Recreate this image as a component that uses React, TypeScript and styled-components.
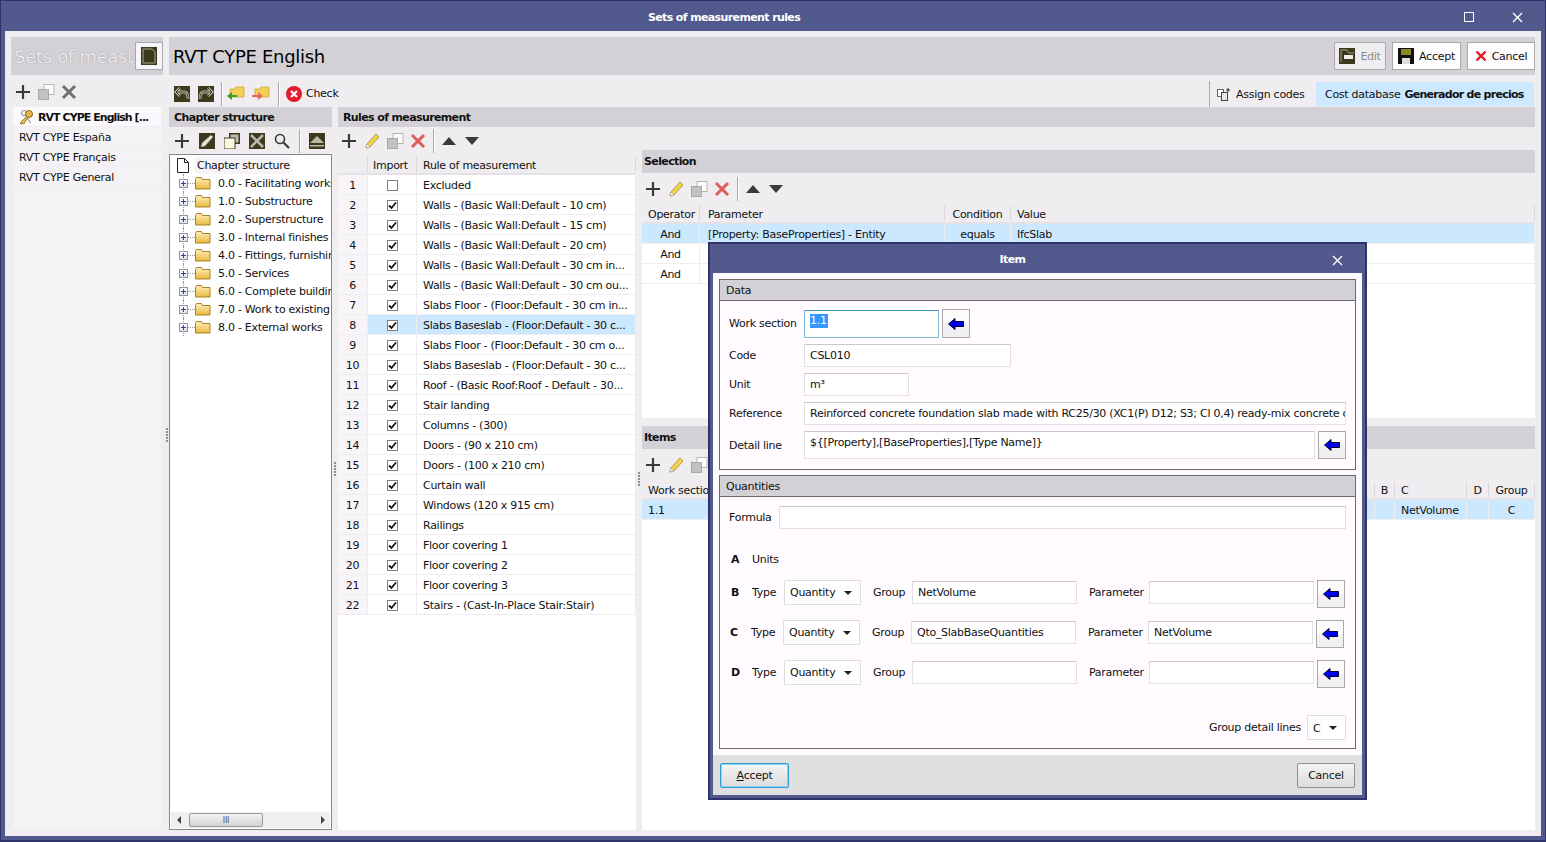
import type { ReactNode } from "react";
import styled, { createGlobalStyle } from "styled-components";

const FONT = `"DejaVu Sans", Tahoma, sans-serif`;
const BOLD_SPACING = "-0.62px";

const RULES = [
  "Excluded",
  "Walls - (Basic Wall:Default - 10 cm)",
  "Walls - (Basic Wall:Default - 15 cm)",
  "Walls - (Basic Wall:Default - 20 cm)",
  "Walls - (Basic Wall:Default - 30 cm in...",
  "Walls - (Basic Wall:Default - 30 cm ou...",
  "Slabs Floor - (Floor:Default - 30 cm in...",
  "Slabs Baseslab - (Floor:Default - 30 c...",
  "Slabs Floor - (Floor:Default - 30 cm o...",
  "Slabs Baseslab - (Floor:Default - 30 c...",
  "Roof - (Basic Roof:Roof - Default - 30...",
  "Stair landing",
  "Columns - (300)",
  "Doors - (90 x 210 cm)",
  "Doors - (100 x 210 cm)",
  "Curtain wall",
  "Windows (120 x 915 cm)",
  "Railings",
  "Floor covering 1",
  "Floor covering 2",
  "Floor covering 3",
  "Stairs - (Cast-In-Place Stair:Stair)",
];

const CHAPTERS = [
  "0.0 - Facilitating works",
  "1.0 - Substructure",
  "2.0 - Superstructure",
  "3.0 - Internal finishes",
  "4.0 - Fittings, furnishings",
  "5.0 - Services",
  "6.0 - Complete buildings",
  "7.0 - Work to existing",
  "8.0 - External works",
];

const SETS = ["RVT CYPE España", "RVT CYPE Français", "RVT CYPE General"];

const GlobalStyle = createGlobalStyle`
  html, body { margin: 0; padding: 0; background: #52598c; }
  body { font-family: ${FONT}; font-size: 11px; letter-spacing: -0.27px; color: #111; }
  * { box-sizing: border-box; }
`;

const Window = styled.div`
  width: 1546px;
  height: 842px;
  display: flex;
  flex-direction: column;
  position: relative;
  overflow: hidden;
  background: #52598c;
  border: 1px solid #2f3468;
  border-bottom-width: 2px;
`;

const TitleBar = styled.div`
  height: 30px;
  flex: none;
  display: flex;
  align-items: center;
  padding: 2px 0 0 4px;
  color: #fff;
  font-weight: bold;
  letter-spacing: ${BOLD_SPACING};
`;

const TitleText = styled.div`
  flex: 1;
  text-align: center;
`;

const TitleButtons = styled.div`
  width: 102px;
  display: flex;
  align-items: center;
  gap: 38px;
  padding-left: 21px;
`;

const Body = styled.div`
  flex: 1;
  margin: 0 4px 4px 4px;
  padding: 6px;
  background: #efedf0;
  display: flex;
  gap: 6px;
  min-height: 0;
`;

const LeftColumn = styled.div`
  width: 152px;
  flex: none;
  display: flex;
  flex-direction: column;
`;

const RightColumn = styled.div`
  flex: 1;
  min-width: 0;
  display: flex;
  flex-direction: column;
`;

const BigHeader = styled.div`
  height: 38px;
  flex: none;
  background: #d3d1d5;
  display: flex;
  align-items: center;
  overflow: hidden;
`;

const GhostTitle = styled.div`
  font-size: 18px;
  letter-spacing: -0.3px;
  color: #eeecef;
  text-shadow: 0 0 1px #77767a;
  padding-left: 3px;
  white-space: nowrap;
  width: 124px;
  overflow: hidden;
`;

const BigTitle = styled.div`
  font-size: 18px;
  letter-spacing: -0.3px;
  color: #000;
  padding-left: 4px;
  flex: 1;
`;

const HeaderIconButton = styled.div`
  width: 28px;
  height: 28px;
  flex: none;
  background: #f6f4f7;
  border: 1px solid #a9a9a9;
  display: flex;
  align-items: center;
  justify-content: center;
`;

const HeaderButton = styled.div<{ $w: number; $dim?: boolean }>`
  width: ${(p) => p.$w}px;
  height: 28px;
  flex: none;
  margin-right: 6px;
  background: ${(p) => (p.$dim ? "#efedf0" : "#fdfdfd")};
  border: 1px solid #a9a9a9;
  color: ${(p) => (p.$dim ? "#8b8b8b" : "#111")};
  display: flex;
  align-items: center;
  justify-content: center;
  gap: 5px;
  &:last-child { margin-right: 0; }
`;

const IconRow = styled.div<{ $h: number; $pt?: number }>`
  height: ${(p) => p.$h}px;
  padding-top: ${(p) => p.$pt ?? 0}px;
  flex: none;
  display: flex;
  align-items: center;
`;

const Slot = styled.div<{ $w?: number }>`
  width: ${(p) => p.$w ?? 23}px;
  height: 24px;
  flex: none;
  display: flex;
  align-items: center;
  justify-content: center;
`;

const Sep = styled.div<{ $l: number; $r: number }>`
  width: 2px;
  height: 24px;
  background: #a8a7aa;
  border-right: 1px solid #fff;
  flex: none;
  margin: 0 ${(p) => p.$r}px 0 ${(p) => p.$l}px;
`;

const SetList = styled.div`
  flex: 1;
  margin: 0 2px 1px 2px;
  background: #f5f2f6;
`;

const SetRow = styled.div<{ $active?: boolean }>`
  height: 20px;
  display: flex;
  align-items: center;
  gap: 4px;
  padding: 1px 0 0 ${(p) => (p.$active ? 5 : 6)}px;
  font-weight: ${(p) => (p.$active ? "bold" : "normal")};
  letter-spacing: ${(p) => (p.$active ? "-0.95px" : "inherit")};
  background: ${(p) => (p.$active ? "#fbf9fc" : "#f5f2f6")};
  border-bottom: 1px solid #efedf0;
  white-space: nowrap;
`;

const MainToolbar = styled.div`
  height: 27px;
  margin-top: 5px;
  flex: none;
  display: flex;
  align-items: center;
`;

const Grow = styled.div`
  flex: 1;
`;

const CheckLabel = styled.div`
  display: flex;
  align-items: center;
  gap: 4px;
  padding-left: 3px;
`;

const AssignCodes = styled.div`
  width: 107px;
  height: 26px;
  border-left: 1px solid #a8a7aa;
  display: flex;
  align-items: center;
  gap: 5px;
  padding: 1px 0 0 6px;
`;

const CostBox = styled.div`
  width: 218px;
  height: 24px;
  margin-right: 1px;
  background: #cce8ff;
  display: flex;
  align-items: center;
  padding: 1px 0 0 9px;
  gap: 4px;
  white-space: nowrap;
  b { letter-spacing: -0.72px; }
`;

const Panes = styled.div`
  flex: 1;
  min-height: 0;
  display: flex;
`;

const ChapterPane = styled.div`
  width: 163px;
  flex: none;
  display: flex;
  flex-direction: column;
`;

const Splitter = styled.div`
  width: 6px;
  flex: none;
  display: flex;
  align-items: center;
  justify-content: center;
`;

const Grip = styled.div`
  width: 2px;
  height: 14px;
  background: repeating-linear-gradient(to bottom, #8f8f93 0 2px, transparent 2px 3px);
`;

const SideGrip = styled(Grip)`
  position: absolute;
  left: 165px;
  top: 427px;
`;

const RulesArea = styled.div`
  flex: 1;
  min-width: 0;
  display: flex;
  flex-direction: column;
`;

const RulesBody = styled.div`
  flex: 1;
  min-height: 0;
  display: flex;
`;

const RulesPane = styled.div`
  width: 298px;
  flex: none;
  display: flex;
  flex-direction: column;
`;

const SelectionPane = styled.div`
  flex: 1;
  min-width: 0;
  display: flex;
  flex-direction: column;
`;

const SectionHeader = styled.div<{ $h?: number; $top?: number }>`
  height: ${(p) => p.$h ?? 20}px;
  margin-top: ${(p) => p.$top ?? 0}px;
  flex: none;
  background: #d3d1d5;
  display: flex;
  align-items: center;
  padding-left: ${(p) => (p.$h ? 2 : 5)}px;
  font-weight: bold;
  letter-spacing: ${BOLD_SPACING};
`;

const TreeBox = styled.div`
  flex: 1;
  background: #fff;
  border: 1px solid #828790;
  display: flex;
  flex-direction: column;
  overflow: hidden;
`;

const TreeRoot = styled.div`
  height: 18px;
  flex: none;
  display: flex;
  align-items: center;
  margin-top: 1px;
  padding-left: 6px;
  gap: 5px;
  white-space: nowrap;
`;

const TreeRootLabel = styled.div`
  background: #f7f3f7;
  padding: 2px 2px;
`;

const TreeItem = styled.div`
  height: 18px;
  flex: none;
  display: flex;
  align-items: center;
  padding-left: 9px;
  white-space: nowrap;
  position: relative;
  &::before {
    content: "";
    position: absolute;
    left: 13px;
    top: 0;
    bottom: 0;
    border-left: 1px dotted #9a9a9a;
  }
  &:last-of-type::before { bottom: 9px; }
`;

const Expander = styled.div`
  width: 9px;
  height: 9px;
  flex: none;
  border: 1px solid #8e96a8;
  background: linear-gradient(#fff, #dfe3ee);
  position: relative;
  z-index: 1;
  &::before {
    content: "";
    position: absolute;
    left: 1px;
    top: 3px;
    width: 5px;
    height: 1px;
    background: #33438c;
  }
  &::after {
    content: "";
    position: absolute;
    left: 3px;
    top: 1px;
    width: 1px;
    height: 5px;
    background: #33438c;
  }
`;

const TreeDash = styled.div`
  width: 7px;
  flex: none;
  border-top: 1px dotted #9a9a9a;
`;

const TreeLabel = styled.div`
  margin-left: 7px;
`;

const TreeSpacer = styled.div`
  flex: 1;
`;

const HScroll = styled.div`
  height: 16px;
  flex: none;
  margin: 0 1px 1px 1px;
  background: #efefef;
  display: flex;
  align-items: center;
  padding: 0 5px 0 6px;
`;

const ScrollThumb = styled.div`
  width: 74px;
  height: 14px;
  margin-left: 8px;
  border: 1px solid #9a9a9a;
  border-radius: 2px;
  background: linear-gradient(#f2f2f2, #d3d3d3);
  display: flex;
  align-items: center;
  justify-content: center;
  font-size: 8px;
  color: #555;
`;

const ScrollArrow = styled.div<{ $dir: "left" | "right" }>`
  width: 0;
  height: 0;
  border-top: 4px solid transparent;
  border-bottom: 4px solid transparent;
  ${(p) =>
    p.$dir === "left"
      ? "border-right: 4px solid #444;"
      : "border-left: 4px solid #444; margin-left: auto;"}
`;

const TableHead = styled.div<{ $cols: string }>`
  height: 20px;
  flex: none;
  display: grid;
  grid-template-columns: ${(p) => p.$cols};
  border-bottom: 2px solid #e4e2e6;
`;

const HeadCell = styled.div<{ $center?: boolean; $pad?: number }>`
  display: flex;
  align-items: center;
  justify-content: ${(p) => (p.$center ? "center" : "flex-start")};
  padding-left: ${(p) => (p.$center ? 0 : p.$pad ?? 6)}px;
  padding-top: 1px;
  border-right: 1px solid #d9d7db;
  margin: 2px 0 1px;
  white-space: nowrap;
  overflow: hidden;
`;

const TableBody = styled.div`
  flex: 1;
  min-height: 0;
  background: #fff;
`;

const TableRow = styled.div<{ $cols: string; $selected?: boolean }>`
  height: 20px;
  display: grid;
  grid-template-columns: ${(p) => p.$cols};
  background: ${(p) => (p.$selected ? "#cce8ff" : "#fff")};
  border-bottom: 1px solid #efedf0;
`;

const Cell = styled.div<{ $center?: boolean; $num?: boolean; $pad?: number }>`
  display: flex;
  align-items: center;
  justify-content: ${(p) => (p.$center ? "center" : "flex-start")};
  padding-left: ${(p) => (p.$center ? 0 : p.$pad ?? 6)}px;
  padding-top: 1px;
  border-right: 1px solid #efedf0;
  white-space: nowrap;
  overflow: hidden;
  background: ${(p) => (p.$num ? "#f8f5f9" : "transparent")};
`;

const CheckBox = styled.div`
  width: 11px;
  height: 11px;
  border: 1px solid #7f7f7f;
  background: #fff;
  display: flex;
  align-items: center;
  justify-content: center;
`;

const SelectionBlock = styled.div`
  height: 291px;
  flex: none;
  display: flex;
  flex-direction: column;
`;

const BlockBody = styled.div`
  flex: 1;
  background: #fff;
`;

/* dialog */
const Dialog = styled.div`
  position: absolute;
  left: 707px;
  top: 241px;
  width: 659px;
  height: 558px;
  background: #52598c;
  border: 2px solid #2f3468;
  display: flex;
  flex-direction: column;
`;

const DialogTitle = styled.div`
  height: 29px;
  flex: none;
  padding: 2px 50px 0 0;
  color: #fff;
  font-weight: bold;
  letter-spacing: ${BOLD_SPACING};
  display: flex;
  align-items: center;
  justify-content: center;
  position: relative;
`;

const DialogClose = styled.div`
  position: absolute;
  right: 22px;
  top: 11px;
  display: flex;
`;

const DialogBody = styled.div`
  flex: 1;
  margin: 0 3px 3px;
  background: #fdfafe;
  display: flex;
  flex-direction: column;
`;

const Group = styled.div<{ $h: number; $top: number }>`
  height: ${(p) => p.$h}px;
  margin: ${(p) => p.$top}px 6px 0;
  flex: none;
  border: 1px solid #6a6a6a;
  background: #fffbff;
  display: flex;
  flex-direction: column;
`;

const GroupHeader = styled.div`
  height: 21px;
  flex: none;
  background: #d3d1d5;
  border-bottom: 1px solid #6a6a6a;
  display: flex;
  align-items: center;
  padding-left: 6px;
`;

const FormRow = styled.div<{ $top: number; $h: number; $left?: number }>`
  height: ${(p) => p.$h}px;
  margin-top: ${(p) => p.$top}px;
  padding-left: ${(p) => p.$left ?? 9}px;
  flex: none;
  display: flex;
  align-items: center;
  white-space: nowrap;
`;

const FieldLabel = styled.div<{ $w: number; $gap?: number }>`
  width: ${(p) => p.$w}px;
  margin-left: ${(p) => p.$gap ?? 0}px;
  flex: none;
`;

const RowLetter = styled.div`
  width: 21px;
  flex: none;
  font-weight: bold;
`;

const Field = styled.div<{ $w: number; $h?: number; $focus?: boolean; $pt?: number }>`
  width: ${(p) => p.$w}px;
  height: ${(p) => p.$h ?? 23}px;
  flex: none;
  background: #fff;
  border: 1px solid ${(p) => (p.$focus ? "#7fb8d8" : "#e2e0e4")};
  border-top-color: ${(p) => (p.$focus ? "#3f97c8" : "#c9c7cb")};
  border-radius: 1px;
  padding: ${(p) => p.$pt ?? 0}px 5px 0;
  display: flex;
  align-items: ${(p) => (p.$pt ? "flex-start" : "center")};
  overflow: hidden;
  white-space: nowrap;
`;

const Selected = styled.span`
  background: #3399ff;
  color: #fff;
  line-height: 14px;
  padding-right: 1px;
`;

const PickButton = styled.div<{ $h?: number; $low?: boolean }>`
  width: 28px;
  height: ${(p) => p.$h ?? 28}px;
  margin: ${(p) => (p.$low ? 4 : 0)}px 0 0 3px;
  flex: none;
  border: 1px solid #a9a9a9;
  background: linear-gradient(#fbfbfb 50%, #f0eff1 50%);
  display: flex;
  align-items: center;
  justify-content: center;
`;

const Select = styled.div<{ $w: number }>`
  width: ${(p) => p.$w}px;
  height: 25px;
  flex: none;
  background: #fff;
  border: 1px solid #dedce0;
  border-radius: 1px;
  display: flex;
  align-items: center;
  padding: 1px 8px 0 5px;
  justify-content: space-between;
  &::after {
    content: "";
    border-left: 4px solid transparent;
    border-right: 4px solid transparent;
    border-top: 4px solid #222;
  }
`;

const RightRow = styled(FormRow)`
  justify-content: flex-end;
  padding-right: 9px;
  gap: 6px;
`;

const DialogFooter = styled.div`
  height: 40px;
  margin-top: 6px;
  flex: none;
  background: #dfdfdf;
  display: flex;
  align-items: center;
  justify-content: space-between;
  padding: 0 7px;
`;

const FooterButton = styled.div<{ $w: number; $primary?: boolean }>`
  width: ${(p) => p.$w}px;
  height: 25px;
  border: 1px solid ${(p) => (p.$primary ? "#2f9ed8" : "#8f8f8f")};
  box-shadow: ${(p) => (p.$primary ? "inset 0 0 0 1px #8fd3f2" : "none")};
  border-radius: 2px;
  background: linear-gradient(#f4f4f4, #dcdcdc);
  display: flex;
  align-items: center;
  justify-content: center;
  u { text-decoration: underline; }
`;

const Svg = styled.svg`
  display: block;
  flex: none;
`;

const Plus = () => (
  <Svg width="16" height="16" viewBox="0 0 16 16">
    <path d="M8 1v14M1 8h14" stroke="#3a3a3a" strokeWidth="2.2" />
  </Svg>
);

const CopyIcon = () => (
  <Svg width="18" height="18" viewBox="0 0 18 18">
    <rect x="7" y="1.5" width="10" height="10" fill="#fff" stroke="#b5b5b5" />
    <rect x="1.5" y="6.5" width="10" height="10" fill="#c2c2c2" stroke="#a8a8a8" />
  </Svg>
);

const CrossIcon = ({ color = "#6f6f6f", size = 16 }: { color?: string; size?: number }) => (
  <Svg width={size} height={size} viewBox="0 0 16 16">
    <path d="M2 2l12 12M14 2L2 14" stroke={color} strokeWidth="3" />
  </Svg>
);

const Pencil = () => (
  <Svg width="16" height="16" viewBox="0 0 16 16">
    <path d="M12 1l3 3-9 10-4 1 1-4z" fill="#f3d24f" stroke="#b39a3a" />
    <path d="M2 15l1-4 3 3z" fill="#fff" stroke="#999" strokeWidth=".6" />
  </Svg>
);

const Triangle = ({ down }: { down?: boolean }) => (
  <Svg width="14" height="8" viewBox="0 0 14 8">
    <path d={down ? "M0 0h14L7 8z" : "M0 8h14L7 0z"} fill="#3a3a3a" />
  </Svg>
);

const OliveBox = ({ children }: { children: ReactNode }) => (
  <Svg width="16" height="16" viewBox="0 0 16 16">
    <rect width="16" height="16" fill="#3b3a1c" />
    {children}
  </Svg>
);

const UndoIcon = ({ flip }: { flip?: boolean }) => (
  <OliveBox>
    <g transform={flip ? "matrix(-1 0 0 1 16 0)" : undefined} fill="none">
      <path d="M6 2L2 6l4 4M2 6h8c3 0 4 3 4 7" stroke="#b9b9ad" strokeWidth="2.8" />
      <path d="M6 2L2 6l4 4M2 6h8c3 0 4 3 4 7" stroke="#3b3a1c" strokeWidth="1" />
    </g>
  </OliveBox>
);

const FolderArrow = ({ right }: { right?: boolean }) => (
  <Svg width="20" height="16" viewBox="0 0 20 16">
    <path d="M4 3h5l1-2h8v10H4z" fill="#f2cf55" stroke="#c9a526" strokeWidth=".7" />
    {right ? (
      <path d="M1 9h6V6l5 4-5 4v-3H1z" fill="#de6a63" />
    ) : (
      <path d="M11 9H6V6l-5 4 5 4v-3h5z" fill="#3d9a25" />
    )}
  </Svg>
);

const RedCheck = () => (
  <Svg width="16" height="16" viewBox="0 0 16 16">
    <circle cx="8" cy="8" r="8" fill="#e11b2c" />
    <path d="M5 5l6 6M11 5l-6 6" stroke="#fff" strokeWidth="2.2" />
  </Svg>
);

const EditChapter = () => (
  <OliveBox>
    <path d="M12 2l2 2-8 9-4 1 1-4z" fill="#e6e6da" stroke="#8a8a7a" strokeWidth=".6" />
  </OliveBox>
);

const CopyChapter = () => (
  <OliveBox>
    <rect width="16" height="16" fill="#efedf0" />
    <rect x="5" width="11" height="11" fill="#3b3a1c" />
    <rect x="6.5" y="1.5" width="8" height="8" fill="#b9b9ad" />
    <rect y="5" width="11" height="11" fill="#fbf8df" stroke="#3b3a1c" />
  </OliveBox>
);

const CrossChapter = () => (
  <OliveBox>
    <path d="M2 2l12 12M14 2L2 14" stroke="#b9b9b0" strokeWidth="2.5" />
  </OliveBox>
);

const SearchIcon = () => (
  <Svg width="16" height="16" viewBox="0 0 16 16">
    <circle cx="6" cy="6" r="4.5" fill="none" stroke="#3a3a3a" strokeWidth="1.6" />
    <path d="M9.5 9.5L15 15" stroke="#3a3a3a" strokeWidth="2.2" />
  </Svg>
);

const UpChapter = () => (
  <OliveBox>
    <path d="M1 10L8 3l7 7z" fill="#b9b9ad" />
    <rect x="1" y="12" width="14" height="1.5" fill="#b9b9ad" />
  </OliveBox>
);

const Doc = () => (
  <Svg width="14" height="15" viewBox="0 0 14 15">
    <path d="M1.5.5h7l4 4v10h-11z" fill="#fff" stroke="#222" />
    <path d="M8.5.5v4h4" fill="none" stroke="#222" />
  </Svg>
);

const Folder = () => (
  <Svg width="16" height="14" viewBox="0 0 16 14">
    <defs>
      <linearGradient id="fold" x1="0" y1="0" x2="0" y2="1">
        <stop offset="0" stopColor="#fff0b8" />
        <stop offset="1" stopColor="#e9b93f" />
      </linearGradient>
    </defs>
    <path d="M.5 3.5l1-2h5l1 2h7.5v9.500H.5z" fill="url(#fold)" stroke="#a9812c" />
  </Svg>
);

const Key = () => (
  <Svg width="16" height="16" viewBox="0 0 16 16">
    <circle cx="6" cy="4" r="2.5" fill="none" stroke="#9aa0aa" strokeWidth="1.2" />
    <path d="M7.5 6l5 8" stroke="#9aa0aa" strokeWidth="1.4" />
    <circle cx="11" cy="5" r="3.5" fill="#e8b84a" stroke="#8a6a1e" />
    <path d="M8.500 7.500L2 14l1.500 1.500L5 14l1 1 1-2 2.500-4" fill="#e8b84a" stroke="#8a6a1e" strokeWidth=".8" />
  </Svg>
);

const Check = () => (
  <Svg width="9" height="9" viewBox="0 0 9 9">
    <path d="M1 4.500l2.500 2.500L8 1.500" fill="none" stroke="#111" strokeWidth="1.800" />
  </Svg>
);

const BlueArrow = () => (
  <Svg width="16" height="12" viewBox="0 0 16 12">
    <path d="M.5 6L7 .5V3.500h8.500v5H7v3z" fill="#0000f0" stroke="#000028" />
  </Svg>
);

const Floppy = () => (
  <Svg width="16" height="16" viewBox="0 0 16 16">
    <rect width="16" height="16" fill="#111" />
    <rect x="3" y="1" width="10" height="6" fill="#8a8a22" />
    <rect x="4" y="10" width="8" height="6" fill="#ddd" />
  </Svg>
);

const EditFolder = () => (
  <Svg width="16" height="16" viewBox="0 0 16 16">
    <rect width="16" height="16" fill="#3b3a1c" />
    <path d="M2 14V2h6l2 3h5" fill="none" stroke="#a5a58a" />
    <rect x="5" y="7" width="9" height="4" fill="#eee" />
  </Svg>
);

const PageIcon = () => (
  <Svg width="16" height="18" viewBox="0 0 16 18">
    <rect width="16" height="18" fill="#3b3a1c" />
    <path d="M2 16V2h9l3 3v11z" fill="none" stroke="#a5a58a" />
  </Svg>
);

const AssignIcon = () => (
  <Svg width="15" height="15" viewBox="0 0 15 15">
    <rect x="1.500" y="2.500" width="6" height="7" fill="#fff" stroke="#666" />
    <rect x="5.500" y="5.500" width="6" height="8" fill="#e8e8e8" stroke="#444" />
    <path d="M12 1v4M10 3h4" stroke="#333" />
  </Svg>
);

const WinClose = () => (
  <Svg width="11" height="11" viewBox="0 0 11 11">
    <path d="M1 1l9 9M10 1l-9 9" stroke="#fff" strokeWidth="1.400" />
  </Svg>
);

const WinMax = () => (
  <Svg width="10" height="10" viewBox="0 0 10 10">
    <rect x=".5" y=".5" width="9" height="9" fill="none" stroke="#fff" />
  </Svg>
);

const RULE_COLS = "30px 49px 1fr";
const SEL_COLS = "58px 245px 66px 1fr";
const ITEM_COLS = "733px 20px 72px 22px 46px";

const ItemToolbar = () => (
  <>
    <Slot $w={22}><Plus /></Slot>
    <Slot><Pencil /></Slot>
    <Slot><CopyIcon /></Slot>
    <Slot><CrossIcon color="#d9605c" /></Slot>
    <Sep $l={4} $r={2} />
    <Slot><Triangle /></Slot>
    <Slot><Triangle down /></Slot>
  </>
);

const TypeRow = ({
  letter,
  left,
  top,
  group,
  param,
}: {
  letter: string;
  left: number;
  top: number;
  group?: string;
  param?: string;
}) => (
  <FormRow $top={top} $h={28} $left={left}>
    <RowLetter>{letter}</RowLetter>
    <FieldLabel $w={32}>Type</FieldLabel>
    <Select $w={77}>Quantity</Select>
    <FieldLabel $w={39} $gap={12}>Group</FieldLabel>
    <Field $w={165}>{group}</Field>
    <FieldLabel $w={60} $gap={12}>Parameter</FieldLabel>
    <Field $w={165}>{param}</Field>
    <PickButton $low><BlueArrow /></PickButton>
  </FormRow>
);

export default function App() {
  return (
    <>
      <GlobalStyle />
      <Window>
        <TitleBar>
          <TitleText>Sets of measurement rules</TitleText>
          <TitleButtons>
            <WinMax />
            <WinClose />
          </TitleButtons>
        </TitleBar>
        <Body>
          <LeftColumn>
            <BigHeader>
              <GhostTitle>Sets of measurement rules</GhostTitle>
              <HeaderIconButton><PageIcon /></HeaderIconButton>
            </BigHeader>
            <IconRow $h={32} $pt={2}>
              <Slot><Plus /></Slot>
              <Slot><CopyIcon /></Slot>
              <Slot><CrossIcon /></Slot>
            </IconRow>
            <SetList>
              <SetRow $active><Key />RVT CYPE English [...</SetRow>
              {SETS.map((s) => <SetRow key={s}>{s}</SetRow>)}
            </SetList>
          </LeftColumn>
          <SideGrip />
          <RightColumn>
            <BigHeader>
              <BigTitle>RVT CYPE English</BigTitle>
              <HeaderButton $w={52} $dim><EditFolder />Edit</HeaderButton>
              <HeaderButton $w={69}><Floppy />Accept</HeaderButton>
              <HeaderButton $w={68}><CrossIcon color="#e8101c" size={12} />Cancel</HeaderButton>
            </BigHeader>
            <MainToolbar>
              <Slot $w={25}><UndoIcon /></Slot>
              <Slot $w={24}><UndoIcon flip /></Slot>
              <Sep $l={3} $r={0} />
              <Slot $w={25}><FolderArrow /></Slot>
              <Slot $w={25}><FolderArrow right /></Slot>
              <Sep $l={5} $r={3} />
              <CheckLabel><RedCheck />Check</CheckLabel>
              <Grow />
              <AssignCodes><AssignIcon />Assign codes</AssignCodes>
              <CostBox>Cost database <b>Generador de precios</b></CostBox>
            </MainToolbar>
            <Panes>
              <ChapterPane>
                <SectionHeader>Chapter structure</SectionHeader>
                <IconRow $h={27}>
                  <Slot $w={25}><Plus /></Slot>
                  <Slot $w={25}><EditChapter /></Slot>
                  <Slot $w={25}><CopyChapter /></Slot>
                  <Slot $w={25}><CrossChapter /></Slot>
                  <Slot $w={25}><SearchIcon /></Slot>
                  <Sep $l={5} $r={3} />
                  <Slot $w={25}><UpChapter /></Slot>
                </IconRow>
                <TreeBox>
                  <TreeRoot><Doc /><TreeRootLabel>Chapter structure</TreeRootLabel></TreeRoot>
                  {CHAPTERS.map((c) => (
                    <TreeItem key={c}>
                      <Expander />
                      <TreeDash />
                      <Folder />
                      <TreeLabel>{c}</TreeLabel>
                    </TreeItem>
                  ))}
                  <TreeSpacer />
                  <HScroll>
                    <ScrollArrow $dir="left" />
                    <ScrollThumb>III</ScrollThumb>
                    <ScrollArrow $dir="right" />
                  </HScroll>
                </TreeBox>
              </ChapterPane>
              <Splitter><Grip /></Splitter>
              <RulesArea>
                <SectionHeader>Rules of measurement</SectionHeader>
                <RulesBody>
                  <RulesPane>
                    <IconRow $h={28}><ItemToolbar /></IconRow>
                    <TableHead $cols={RULE_COLS}>
                      <HeadCell />
                      <HeadCell $pad={5}>Import</HeadCell>
                      <HeadCell>Rule of measurement</HeadCell>
                    </TableHead>
                    <TableBody>
                      {RULES.map((r, i) => (
                        <TableRow key={i} $cols={RULE_COLS} $selected={i === 7}>
                          <Cell $center $num>{i + 1}</Cell>
                          <Cell $center>
                            <CheckBox>{i > 0 && <Check />}</CheckBox>
                          </Cell>
                          <Cell>{r}</Cell>
                        </TableRow>
                      ))}
                    </TableBody>
                  </RulesPane>
                  <Splitter><Grip /></Splitter>
                  <SelectionPane>
                    <SelectionBlock>
                      <SectionHeader $h={23} $top={23}>Selection</SectionHeader>
                      <IconRow $h={31}><ItemToolbar /></IconRow>
                      <TableHead $cols={SEL_COLS}>
                        <HeadCell>Operator</HeadCell>
                        <HeadCell $pad={8}>Parameter</HeadCell>
                        <HeadCell $center>Condition</HeadCell>
                        <HeadCell>Value</HeadCell>
                      </TableHead>
                      <BlockBody>
                        <TableRow $cols={SEL_COLS} $selected>
                          <Cell $center>And</Cell>
                          <Cell $pad={8}>[Property: BaseProperties] - Entity</Cell>
                          <Cell $center>equals</Cell>
                          <Cell>IfcSlab</Cell>
                        </TableRow>
                        <TableRow $cols={SEL_COLS}>
                          <Cell $center>And</Cell><Cell /><Cell /><Cell />
                        </TableRow>
                        <TableRow $cols={SEL_COLS}>
                          <Cell $center>And</Cell><Cell /><Cell /><Cell />
                        </TableRow>
                      </BlockBody>
                    </SelectionBlock>
                    <SectionHeader $h={23} $top={8}>Items</SectionHeader>
                    <IconRow $h={31}><ItemToolbar /></IconRow>
                    <TableHead $cols={ITEM_COLS}>
                      <HeadCell>Work section</HeadCell>
                      <HeadCell $center>B</HeadCell>
                      <HeadCell>C</HeadCell>
                      <HeadCell $center>D</HeadCell>
                      <HeadCell $center>Group</HeadCell>
                    </TableHead>
                    <TableBody>
                      <TableRow $cols={ITEM_COLS} $selected>
                        <Cell>1.1</Cell>
                        <Cell />
                        <Cell>NetVolume</Cell>
                        <Cell />
                        <Cell $center>C</Cell>
                      </TableRow>
                    </TableBody>
                  </SelectionPane>
                </RulesBody>
              </RulesArea>
            </Panes>
          </RightColumn>
        </Body>
        <Dialog>
          <DialogTitle>
            Item
            <DialogClose><WinClose /></DialogClose>
          </DialogTitle>
          <DialogBody>
            <Group $h={191} $top={6}>
              <GroupHeader>Data</GroupHeader>
              <FormRow $top={8} $h={29}>
                <FieldLabel $w={75}>Work section</FieldLabel>
                <Field $w={135} $h={28} $focus $pt={3}><Selected>1.1</Selected></Field>
                <PickButton $h={29}><BlueArrow /></PickButton>
              </FormRow>
              <FormRow $top={6} $h={23}>
                <FieldLabel $w={75}>Code</FieldLabel>
                <Field $w={207}>CSL010</Field>
              </FormRow>
              <FormRow $top={6} $h={23}>
                <FieldLabel $w={75}>Unit</FieldLabel>
                <Field $w={105}>m³</Field>
              </FormRow>
              <FormRow $top={6} $h={23}>
                <FieldLabel $w={75}>Reference</FieldLabel>
                <Field $w={542}>Reinforced concrete foundation slab made with RC25/30 (XC1(P) D12; S3; Cl 0,4) ready-mix concrete c</Field>
              </FormRow>
              <FormRow $top={6} $h={28}>
                <FieldLabel $w={75}>Detail line</FieldLabel>
                <Field $w={511} $h={28} $pt={4}>$&#123;[Property],[BaseProperties],[Type Name]&#125;</Field>
                <PickButton><BlueArrow /></PickButton>
              </FormRow>
            </Group>
            <Group $h={274} $top={5}>
              <GroupHeader>Quantities</GroupHeader>
              <FormRow $top={9} $h={23}>
                <FieldLabel $w={50}>Formula</FieldLabel>
                <Field $w={567} />
              </FormRow>
              <FormRow $top={20} $h={20} $left={11}>
                <RowLetter>A</RowLetter>
                Units
              </FormRow>
              <TypeRow letter="B" left={11} top={9} group="NetVolume" />
              <TypeRow letter="C" left={10} top={12} group="Qto_SlabBaseQuantities" param="NetVolume" />
              <TypeRow letter="D" left={11} top={12} />
              <RightRow $top={29} $h={25}>
                Group detail lines
                <Select $w={39}>C</Select>
              </RightRow>
            </Group>
            <DialogFooter>
              <FooterButton $w={69} $primary><span><u>A</u>ccept</span></FooterButton>
              <FooterButton $w={58}>Cancel</FooterButton>
            </DialogFooter>
          </DialogBody>
        </Dialog>
      </Window>
    </>
  );
}
